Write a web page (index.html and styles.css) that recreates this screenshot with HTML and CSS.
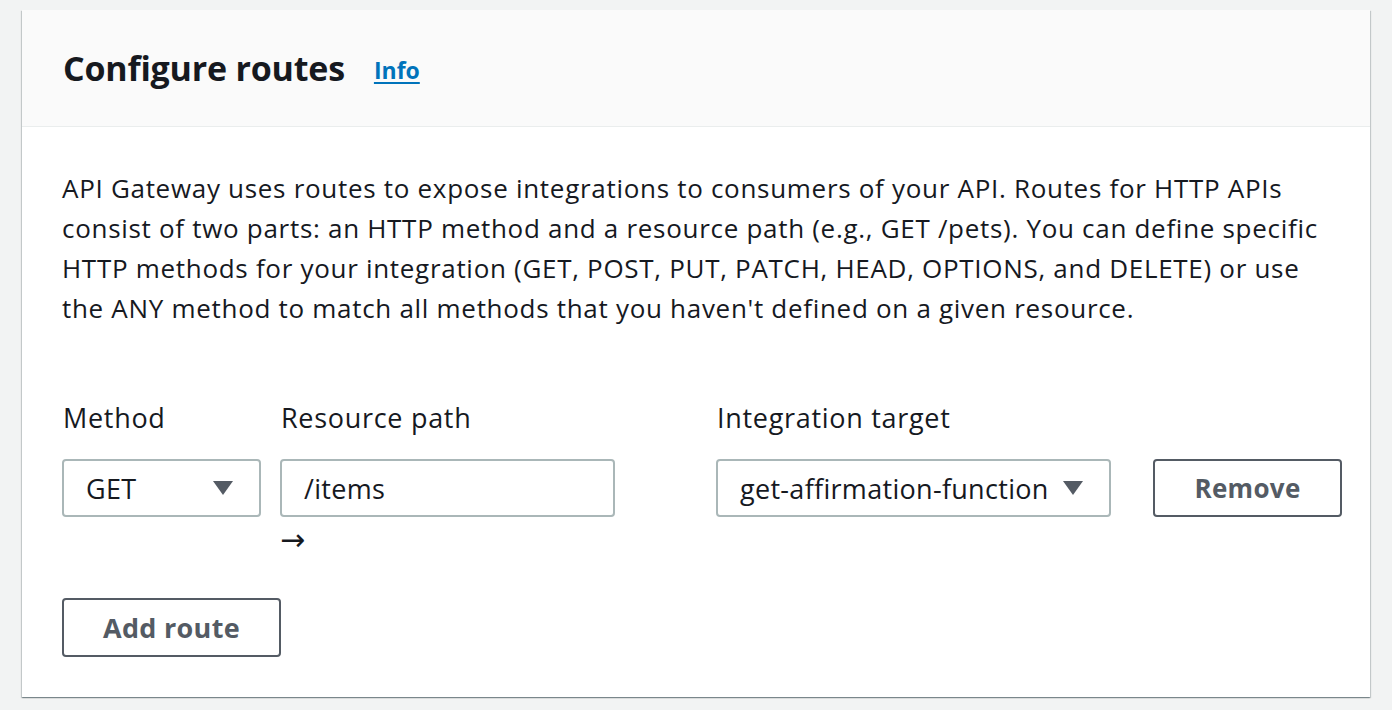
FILE: index.html
```html
<!DOCTYPE html>
<html>
<head>
<meta charset="utf-8">
<link rel="stylesheet" href="styles.css">
</head>
<body>
<div class="card">
  <div class="card-header">
    <h2 class="title">Configure routes</h2>
    <a class="info" href="#">Info</a>
  </div>
  <div class="card-body">
    <p class="desc">API Gateway uses routes to expose integrations to consumers of your API. Routes for HTTP APIs consist of two parts: an HTTP method and a resource path (e.g., GET /pets). You can define specific HTTP methods for your integration (GET, POST, PUT, PATCH, HEAD, OPTIONS, and DELETE) or use the ANY method to match all methods that you haven't defined on a given resource.</p>
    <div class="route-row">
      <div class="field f-method">
        <label class="label">Method</label>
        <div class="select">
          <span>GET</span>
          <svg class="caret" viewBox="0 0 20 14"><path d="M0 0h20L10 14z"/></svg>
        </div>
      </div>
      <div class="field f-path">
        <label class="label">Resource path</label>
        <div class="input">/items</div>
        <div class="arrow">→</div>
      </div>
      <div class="field f-target">
        <label class="label">Integration target</label>
        <div class="select">
          <span>get-affirmation-function</span>
          <svg class="caret" viewBox="0 0 20 14"><path d="M0 0h20L10 14z"/></svg>
        </div>
      </div>
      <div class="field f-remove">
        <button class="btn">Remove</button>
      </div>
    </div>
    <button class="btn btn-add">Add route</button>
  </div>
</div>
</body>
</html>
```
FILE: styles.css
```css
html, body {
  margin: 0;
  padding: 0;
}
body {
  background: #f2f3f3;
  font-family: "Open Sans", "Noto Sans", sans-serif;
  color: #16191f;
  padding: 10px 22px 13px 22px;
}
.card {
  width: 1348px;
  background: #fff;
  box-shadow: 0 1px 1px 0 rgba(0,28,36,.3), 1px 1px 1px 0 rgba(0,28,36,.15), -1px 1px 1px 0 rgba(0,28,36,.15);
}
.card-header {
  background: #fafafa;
  border-bottom: 1px solid #eaeded;
  display: flex;
  align-items: center;
  padding-left: 41px;
  box-sizing: border-box;
  height: 117px;
}
.title {
  margin: 0;
  font-size: 34px;
  font-weight: 700;
  letter-spacing: -0.2px;
}
.info {
  margin-left: 29px;
  color: #0073bb;
  font-weight: 700;
  font-size: 23px;
  text-decoration: underline;
  text-underline-offset: 3px;
  margin-top: 4px;
}
.card-body {
  padding: 41px 28px 40px 40px;
}
.desc {
  margin: 0;
  max-width: 1262px;
  font-size: 26px;
  letter-spacing: 0.7px;
  line-height: 40px;
}
.route-row {
  display: flex;
  margin-top: 70px;
  align-items: flex-start;
}
.field {
  display: flex;
  flex-direction: column;
  flex-shrink: 0;
}
.label {
  font-size: 27px;
  letter-spacing: 0.7px;
  line-height: 40px;
  margin-left: 1px;
  margin-bottom: 21px;
}
.f-method { width: 199px; }
.f-path { width: 335px; margin-left: 19px; }
.f-target { width: 395px; margin-left: 101px; }
.f-remove { margin-left: 42px; padding-top: 61px; }
.select, .input {
  height: 58px;
  box-sizing: border-box;
  border: 2px solid #aab7b8;
  border-radius: 4px;
  display: flex;
  align-items: center;
  font-size: 27px;
  letter-spacing: 0.3px;
  padding: 0 26px 0 22px;
}
.select span { flex: 1; white-space: nowrap; }
.caret {
  width: 20px;
  height: 14px;
  fill: #545b64;
  flex-shrink: 0;
}
.arrow {
  font-family: "DejaVu Sans", sans-serif;
  font-size: 30px;
  line-height: 40px;
  margin-top: 3px;
}
.btn {
  height: 58px;
  box-sizing: border-box;
  border: 2px solid #545b64;
  border-radius: 4px;
  background: #fff;
  color: #545b64;
  font-family: "Open Sans", "Noto Sans", sans-serif;
  font-weight: 700;
  font-size: 26px;
  letter-spacing: 0.3px;
  padding: 0;
  width: 189px;
}
.btn-add {
  width: 219px;
  height: 59px;
  margin-top: 38px;
  display: block;
  font-size: 27px;
}
```
